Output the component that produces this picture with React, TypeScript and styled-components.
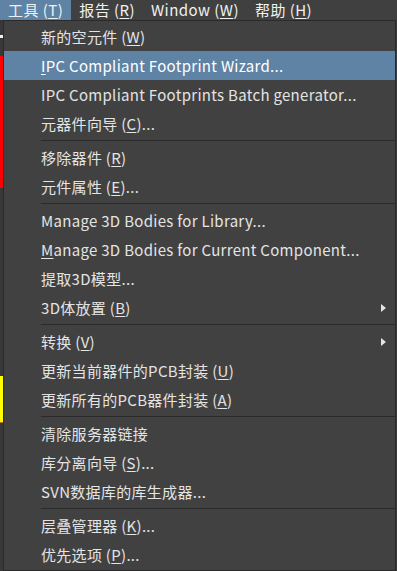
import React from "react";
import styled, { createGlobalStyle } from "styled-components";

type Item =
  | { kind: "item"; label: string; arrow?: boolean; hot?: boolean }
  | { kind: "sep" };

const menuBar = ["工具 (&T)", "报告 (&R)", "Window (&W)", "帮助 (&H)"];

const items: Item[] = [
  { kind: "item", label: "新的空元件 (&W)" },
  { kind: "item", label: "&IPC Compliant Footprint Wizard...", hot: true },
  { kind: "item", label: "IPC Compliant Footprints Batch generator..." },
  { kind: "item", label: "元器件向导 (&C)..." },
  { kind: "sep" },
  { kind: "item", label: "移除器件 (&R)" },
  { kind: "item", label: "元件属性 (&E)..." },
  { kind: "sep" },
  { kind: "item", label: "Manage 3D Bodies for Library..." },
  { kind: "item", label: "&Manage 3D Bodies for Current Component..." },
  { kind: "item", label: "提取3D模型..." },
  { kind: "item", label: "3D体放置 (&B)", arrow: true },
  { kind: "sep" },
  { kind: "item", label: "转换 (&V)", arrow: true },
  { kind: "item", label: "更新当前器件的PCB封装 (&U)" },
  { kind: "item", label: "更新所有的PCB器件封装 (&A)" },
  { kind: "sep" },
  { kind: "item", label: "清除服务器链接" },
  { kind: "item", label: "库分离向导 (&S)..." },
  { kind: "item", label: "SVN数据库的库生成器..." },
  { kind: "sep" },
  { kind: "item", label: "层叠管理器 (&K)..." },
  { kind: "item", label: "优先选项 (&P)..." },
];

// background strip peeking out left of the menu
const strip = [
  { h: 15, c: "#383838" },
  { h: 3, c: "#f2f2f2" },
  { h: 18, c: "#383838" },
  { h: 132, c: "#ff0000" },
  { h: 188, c: "#383838" },
  { h: 46, c: "#ffff00" },
  { h: 1, c: "#c87020" },
  { h: 148, c: "#383838" },
];

const Label: React.FC<{ text: string }> = ({ text }) => {
  const i = text.indexOf("&");
  if (i < 0) return <>{text}</>;
  return (
    <>
      {text.slice(0, i)}
      <Mnemonic>{text[i + 1]}</Mnemonic>
      {text.slice(i + 2)}
    </>
  );
};

const App: React.FC = () => {
  return (
    <Screen>
      <GlobalStyle />
      <MenuBar>
        {menuBar.map((m, i) => (
          <BarItem key={m} $active={i === 0}>
            <Label text={m} />
          </BarItem>
        ))}
      </MenuBar>
      <Body>
        <Strip>
          {strip.map((s, i) => (
            <StripPart key={i} $h={s.h} $c={s.c} />
          ))}
        </Strip>
        <Panel>
          {items.map((it, i) =>
            it.kind === "sep" ? (
              <Separator key={i}>
                <SepLine />
              </Separator>
            ) : (
              <Row key={i} $hot={!!it.hot}>
                <Label text={it.label} />
                {it.arrow && <Arrow />}
              </Row>
            )
          )}
        </Panel>
      </Body>
    </Screen>
  );
};

export default App;

const GlobalStyle = createGlobalStyle`
  html, body {
    margin: 0;
    padding: 0;
    background: #3c3c3c;
  }
  body {
    font-family: "Noto Sans CJK SC", "Liberation Sans", sans-serif;
  }
`;

const Screen = styled.div`
  width: 397px;
  height: 571px;
  display: flex;
  flex-direction: column;
  overflow: hidden;
  background: #3c3c3c;
`;

const MenuBar = styled.div`
  display: flex;
  height: 20px;
  background: #404040;
`;

const BarItem = styled.div<{ $active: boolean }>`
  padding: 0 8px;
  line-height: 20px;
  font-size: 15px;
  letter-spacing: 0.45px;
  color: #f0f0f0;
  white-space: nowrap;
  background: ${(p) => (p.$active ? "#5f83a5" : "transparent")};
`;

const Body = styled.div`
  flex: 1;
  display: flex;
  min-height: 0;
`;

const Strip = styled.div`
  width: 3px;
  display: flex;
  flex-direction: column;
`;

const StripPart = styled.div<{ $h: number; $c: string }>`
  height: ${(p) => p.$h}px;
  flex-shrink: 0;
  background: ${(p) => p.$c};
`;

const Panel = styled.div`
  flex: 1;
  margin-right: 1px;
  border: 1px solid #2a2a2a;
  background: #414141;
  padding: 1px 0;
  display: flex;
  flex-direction: column;
`;

const Row = styled.div<{ $hot: boolean }>`
  height: 29px;
  flex-shrink: 0;
  display: flex;
  align-items: center;
  padding: 0 9px 0 37px;
  font-size: 15px;
  letter-spacing: 0.3px;
  white-space: nowrap;
  color: ${(p) => (p.$hot ? "#ffffff" : "#e4e4e4")};
  background: ${(p) => (p.$hot ? "#5f83a5" : "transparent")};
`;

const Mnemonic = styled.span`
  text-decoration: underline;
  text-underline-offset: 2px;
`;

const Arrow = styled.span`
  margin-left: auto;
  width: 0;
  height: 0;
  border-left: 5px solid #e4e4e4;
  border-top: 4.5px solid transparent;
  border-bottom: 4.5px solid transparent;
`;

const Separator = styled.div`
  height: 5px;
  flex-shrink: 0;
  display: flex;
  align-items: center;
  padding-left: 37px;
`;

const SepLine = styled.div`
  flex: 1;
  height: 1px;
  background: #2a2a2a;
`;
